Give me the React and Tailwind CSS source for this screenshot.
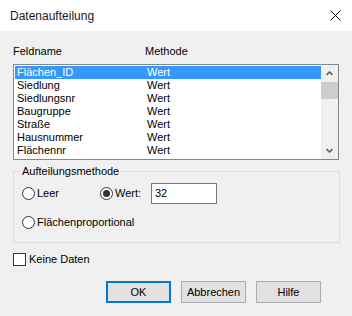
import React from "react";

function Radio({ checked }) {
  return (
    <svg width="13" height="13" viewBox="0 0 13 13" className="shrink-0">
      <circle cx="6.5" cy="6.5" r="6" fill="#fff" stroke="#333" strokeWidth="1" />
      {checked && <circle cx="6.5" cy="6.5" r="3.5" fill="#333" />}
    </svg>
  );
}

export default function App() {
  const rows = ["Flächen_ID", "Siedlung", "Siedlungsnr", "Baugruppe", "Straße", "Hausnummer", "Flächennr"];
  return (
    <div className="w-[352px] h-[316px] bg-[#f0f0f0] text-[11px] leading-[13px] text-black font-['Liberation_Sans',Arial,sans-serif] flex flex-col overflow-hidden">
      <div className="h-[31px] shrink-0 bg-white flex items-center justify-between pl-[10px] pr-[11px]">
        <span className="text-[12px] leading-[14px] text-[#1a1a1a]">Datenaufteilung</span>
        <svg width="11" height="11" viewBox="0 0 11 11">
          <path d="M0.5 0.5 L10.5 10.5 M10.5 0.5 L0.5 10.5" stroke="#000" strokeWidth="1" />
        </svg>
      </div>

      <div className="flex flex-col px-[13px]">
        <div className="mt-[14px] flex h-[13px]">
          <span className="w-[132px]">Feldname</span>
          <span>Methode</span>
        </div>

        <div className="mt-[6px] h-[96px] w-[326px] border border-[#828790] bg-white flex">
          <div className="flex-1 pl-px pt-px flex flex-col">
            {rows.map((r, i) => (
              <div
                key={r}
                className={
                  "h-[13px] flex pl-[2px] " + (i === 0 ? "bg-[#3399ff] text-white" : "")
                }
              >
                <span className="w-[130px]">{r}</span>
                <span>Wert</span>
              </div>
            ))}
          </div>
          <div className="w-[17px] bg-[#f0f0f0] flex flex-col">
            <div className="h-[17px] flex items-center justify-center">
              <svg width="7" height="5" viewBox="0 0 7 5">
                <path d="M0.5 4 L3.5 1 L6.5 4" fill="none" stroke="#606060" strokeWidth="1.6" />
              </svg>
            </div>
            <div className="h-[17px] bg-[#cdcdcd]" />
            <div className="flex-1" />
            <div className="h-[17px] flex items-center justify-center">
              <svg width="7" height="5" viewBox="0 0 7 5">
                <path d="M0.5 1 L3.5 4 L6.5 1" fill="none" stroke="#606060" strokeWidth="1.6" />
              </svg>
            </div>
          </div>
        </div>

        <fieldset className="mt-[5px] w-[327px] h-[78px] border border-[#dcdcdc] px-[8px]">
          <legend className="-ml-[2px] px-[2px] leading-[13px]">Aufteilungsmethode</legend>
          <div className="mt-[5px] flex items-center h-[21px]">
            <Radio />
            <span className="ml-[2px] w-[63px]">Leer</span>
            <Radio checked />
            <span className="ml-[2px] w-[36px]">Wert:</span>
            <div className="w-[66px] h-[21px] bg-white border border-[#7a7a7a] flex items-center pl-[3px]">32</div>
          </div>
          <div className="mt-[12px] flex items-center h-[13px]">
            <Radio />
            <span className="ml-[2px]">Flächenproportional</span>
          </div>
        </fieldset>

        <div className="mt-[10px] flex items-center h-[13px]">
          <div className="w-[13px] h-[13px] bg-white border border-[#333]" />
          <span className="ml-[3px]">Keine Daten</span>
        </div>
      </div>

      <div className="mt-[15px] flex justify-end gap-[10px] pr-[31px]">
        <button className="w-[65px] h-[22px] bg-[#e1e1e1] border-2 border-[#0078d7] flex items-center justify-center">OK</button>
        <button className="w-[65px] h-[22px] bg-[#e1e1e1] border border-[#adadad] flex items-center justify-center">Abbrechen</button>
        <button className="w-[65px] h-[22px] bg-[#e1e1e1] border border-[#adadad] flex items-center justify-center">Hilfe</button>
      </div>
    </div>
  );
}
